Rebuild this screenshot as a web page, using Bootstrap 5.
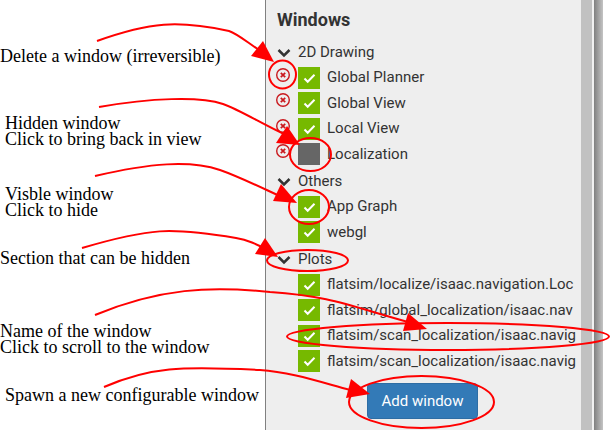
<!DOCTYPE html>
<html lang="en">
<head>
<meta charset="utf-8">
<meta name="viewport" content="width=device-width, initial-scale=1">
<title>Windows panel guide</title>
<link href="https://cdn.jsdelivr.net/npm/bootstrap@5.3.0/dist/css/bootstrap.min.css" rel="stylesheet">
<style>
body { background: #fff; overflow: hidden; }
.guide { min-height: 100vh; }
.notes { flex: 0 0 265px; padding-top: 48px; font: 18px/16px "Liberation Serif", serif; color: #000; white-space: nowrap; }
.notes p { margin: 0 0 32px; }
.notes .indent { padding-left: 5px; }
.notes .space-md { margin-bottom: 39px; }
.notes .space-lg { margin-bottom: 51px; }
.notes .space-xl { margin-bottom: 57px; }
.panel { min-width: 0; background: #eee; border-left: 1px solid #808080; font-family: Roboto, sans-serif; font-size: 15px; color: #333; }
.panel-body-area { min-width: 0; padding: 8px 2px 12px 0; }
.panel h1, .window-group { padding-left: 11px; }
.panel h1 { font-size: 18px; line-height: 23px; font-weight: 700; margin: 0 0 8px; }
.section-toggle { display: flex; align-items: center; gap: 7px; height: 26px; padding: 0; border: 0; background: none; color: inherit; }
.window-group + .window-group { margin-top: 1px; }
.window-row { display: grid; grid-template-columns: 14px 22px minmax(0, 1fr); column-gap: 7px; align-items: center; line-height: 1.7; }
.window-row > * { grid-row: 1; }
.delete { grid-column: 1; display: flex; padding: 0 0 6px; border: 0; background: none; margin-left: -1px; }
.window-row .form-check-input { grid-column: 2; width: 22px; height: 22px; margin: 0; border: 0; border-radius: 0; background-color: #666; }
.window-row .form-check-input:checked { background-color: #76b900; background-size: 22px; background-image: url("data:image/svg+xml,%3csvg xmlns='http://www.w3.org/2000/svg' viewBox='0 0 22 22'%3e%3cpath d='M6.5 11.5l3.2 3.3 6.8-7' fill='none' stroke='%23fff' stroke-width='2'/%3e%3c/svg%3e"); }
.window-name { grid-column: 3; overflow: hidden; white-space: nowrap; color: inherit; text-decoration: none; }
.add-window { --bs-btn-bg: #337ab7; --bs-btn-border-color: #2e6da4; --bs-btn-color: #fff; --bs-btn-border-radius: 4px; --bs-btn-font-size: 15px; --bs-btn-padding-x: 14px; height: 36px; margin-top: 9px; }
.track { flex: 0 0 13px; background: #c1c1c1; border-right: 2px solid #f1f1f1; }
.edge { flex: 0 0 9px; background: linear-gradient(90deg, #808080, #c4c4c4); }
.outside { flex: 0 0 7px; }
.callouts { position: absolute; left: 0; top: 0; width: 610px; height: 430px; pointer-events: none; }
</style>
<script src="https://cdn.jsdelivr.net/npm/bootstrap@5.3.0/dist/js/bootstrap.bundle.min.js"></script>
</head>
<body>
<svg width="0" height="0" class="position-absolute" aria-hidden="true">
  <symbol id="chevron" viewBox="0 0 14 14"><path d="M1.500 5l5.500 5.500L12.500 5" fill="none" stroke="#333" stroke-width="2.500"/></symbol>
  <symbol id="remove" viewBox="0 0 14 14"><circle cx="7" cy="7" r="6.300" fill="none" stroke="#c9191e" stroke-width="1.400"/><path d="M4.800 4.800l4.400 4.400M9.200 4.800l-4.400 4.400" stroke="#c9191e" stroke-width="1.700"/></symbol>
</svg>
<div class="guide d-flex position-relative">
  <aside class="notes">
    <p class="space-lg">Delete a window (irreversible)</p>
    <p class="indent space-md">Hidden window<br>Click to bring back in view</p>
    <p class="indent">Visble window<br>Click to hide</p>
    <p class="space-xl">Section that can be hidden</p>
    <p>Name of the window<br>Click to scroll to the window</p>
    <p class="indent">Spawn a new configurable window</p>
  </aside>
  <main class="panel flex-grow-1 d-flex">
    <div class="panel-body-area flex-grow-1">
      <h1>Windows</h1>
      <section class="window-group">
        <button type="button" class="section-toggle"><svg width="14" height="14"><use href="#chevron"/></svg>2D Drawing</button>
        <div class="window-row"><button type="button" class="delete" aria-label="Delete Global Planner"><svg width="14" height="14"><use href="#remove"/></svg></button><input class="form-check-input" type="checkbox" aria-label="Show Global Planner" checked><a class="window-name" href="#">Global Planner</a></div>
        <div class="window-row"><button type="button" class="delete" aria-label="Delete Global View"><svg width="14" height="14"><use href="#remove"/></svg></button><input class="form-check-input" type="checkbox" aria-label="Show Global View" checked><a class="window-name" href="#">Global View</a></div>
        <div class="window-row"><button type="button" class="delete" aria-label="Delete Local View"><svg width="14" height="14"><use href="#remove"/></svg></button><input class="form-check-input" type="checkbox" aria-label="Show Local View" checked><a class="window-name" href="#">Local View</a></div>
        <div class="window-row"><button type="button" class="delete" aria-label="Delete Localization"><svg width="14" height="14"><use href="#remove"/></svg></button><input class="form-check-input" type="checkbox" aria-label="Show Localization"><a class="window-name" href="#">Localization</a></div>
      </section>
      <section class="window-group">
        <button type="button" class="section-toggle"><svg width="14" height="14"><use href="#chevron"/></svg>Others</button>
        <div class="window-row"><input class="form-check-input" type="checkbox" aria-label="Show App Graph" checked><a class="window-name" href="#">App Graph</a></div>
        <div class="window-row"><input class="form-check-input" type="checkbox" aria-label="Show webgl" checked><a class="window-name" href="#">webgl</a></div>
      </section>
      <section class="window-group">
        <button type="button" class="section-toggle"><svg width="14" height="14"><use href="#chevron"/></svg>Plots</button>
        <div class="window-row"><input class="form-check-input" type="checkbox" aria-label="Show localize plot" checked><a class="window-name" href="#">flatsim/localize/isaac.navigation.Loc</a></div>
        <div class="window-row"><input class="form-check-input" type="checkbox" aria-label="Show global localization plot" checked><a class="window-name" href="#">flatsim/global_localization/isaac.nav</a></div>
        <div class="window-row"><input class="form-check-input" type="checkbox" aria-label="Show scan localization plot" checked><a class="window-name" href="#">flatsim/scan_localization/isaac.navig</a></div>
        <div class="window-row"><input class="form-check-input" type="checkbox" aria-label="Show second scan localization plot" checked><a class="window-name" href="#">flatsim/scan_localization/isaac.navig</a></div>
      </section>
      <div class="text-center"><button type="button" class="btn add-window">Add window</button></div>
    </div>
    <div class="track"></div>
  </main>
  <div class="edge"></div>
  <div class="outside"></div>
  <svg class="callouts" viewBox="0 0 610 430" fill="none" stroke="#f00" stroke-width="2" aria-hidden="true">
    <path d="M97 41C150 22 178 20 229 31C238 34 248 43 262 52"/>
    <path d="M99 107C150 98 200 96 223 104C240 110 262 124 286 135"/>
    <path d="M95 176C150 163 190 160 220 170C240 177 262 188 284 198"/>
    <path d="M82 248C150 228 170 227 236 238C248 240 256 244 268 250"/>
    <path d="M95 315C160 288 210 286 270 292C330 296 350 306 408 322"/>
    <path d="M104 387C150 367 180 366 260 370C290 372 320 382 350 390"/>
    <g fill="#f00" stroke="none">
      <path d="M274 62L263 41L251 56Z"/>
      <path d="M300 145L287 126L276 143Z"/>
      <path d="M297 203L281 184L273 201Z"/>
      <path d="M278 257L265 238L255 254Z"/>
      <path d="M427 329L408 313L403 331Z"/>
      <path d="M370 394L351 379L346 398Z"/>
    </g>
    <ellipse cx="282.500" cy="74.500" rx="13.500" ry="14"/>
    <ellipse cx="310.500" cy="154.500" rx="20.500" ry="16.500"/>
    <ellipse cx="309" cy="207" rx="20" ry="17"/>
    <ellipse cx="307.500" cy="260.500" rx="40.500" ry="10.500"/>
    <ellipse cx="448" cy="336.500" rx="161" ry="13.500"/>
    <ellipse cx="421.500" cy="402" rx="72.500" ry="26"/>
  </svg>
</div>
</body>
</html>
